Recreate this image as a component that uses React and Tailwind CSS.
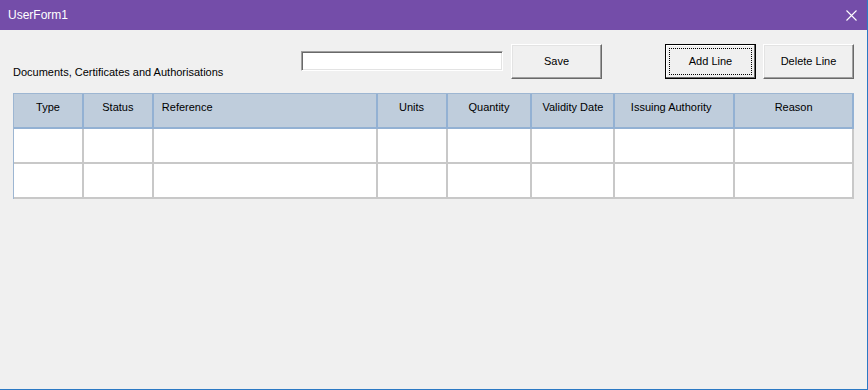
import React from "react";

const cols = [
  { name: "Type", w: "w-[70px]", align: "justify-center" },
  { name: "Status", w: "w-[70px]", align: "justify-center" },
  { name: "Reference", w: "w-[224px]", align: "justify-start pl-[8px]" },
  { name: "Units", w: "w-[70px]", align: "justify-center" },
  { name: "Quantity", w: "w-[85px]", align: "justify-center" },
  { name: "Validity Date", w: "w-[83px]", align: "justify-center" },
  { name: "Issuing Authority", w: "w-[120px]", align: "justify-center pr-[6px]" },
  { name: "Reason", w: "w-[119px]", align: "justify-center" },
];

function RaisedButton({ children, focused }) {
  if (focused) {
    return (
      <button className="relative w-[91px] h-[35px] border border-black bg-[#f0f0f0] shadow-[inset_-1px_-1px_0_#696969,inset_1px_1px_0_#ffffff] text-[11px] text-black flex items-center justify-center">
        <span className="absolute inset-[3px] border border-dotted border-black" />
        {children}
      </button>
    );
  }
  return (
    <button className="w-[91px] h-[35px] border border-t-white border-l-white border-r-[#696969] border-b-[#696969] bg-[#f0f0f0] shadow-[inset_-1px_-1px_0_#a0a0a0,inset_1px_1px_0_#e3e3e3] text-[11px] text-black flex items-center justify-center">
      {children}
    </button>
  );
}

export default function App() {
  return (
    <div
      className="w-[868px] h-[390px] bg-[#f0f0f0] border-r border-b border-[#2b79c4] flex flex-col overflow-hidden"
      style={{ fontFamily: '"Liberation Sans", Arial, sans-serif' }}
    >
      {/* title bar */}
      <div className="h-[30px] bg-[#744da9] flex items-center justify-between pl-[8px] pr-[10px] shrink-0">
        <span className="text-white text-[12px]">UserForm1</span>
        <svg width="11" height="11" viewBox="0 0 11 11" className="mr-[0px]">
          <path d="M0.5 0.5 L10.5 10.5 M10.5 0.5 L0.5 10.5" stroke="#ffffff" strokeWidth="1.1" />
        </svg>
      </div>

      <div className="pl-[13px] pt-[14px]">
        {/* top controls */}
        <div className="flex items-start">
          <div className="w-[288px] mt-[22px] text-[11px] leading-[13px] text-black whitespace-nowrap">
            Documents, Certificates and Authorisations
          </div>
          <div className="mt-[7px] w-[202px] h-[20px] bg-white border border-t-[#a0a0a0] border-l-[#a0a0a0] border-r-white border-b-white shadow-[inset_1px_1px_0_#696969,inset_-1px_-1px_0_#e3e3e3]" />
          <div className="ml-[8px]">
            <RaisedButton>Save</RaisedButton>
          </div>
          <div className="ml-[63px]">
            <RaisedButton focused>Add Line</RaisedButton>
          </div>
          <div className="ml-[7px]">
            <RaisedButton>Delete Line</RaisedButton>
          </div>
        </div>

        {/* grid */}
        <div className="mt-[14px] w-[841px] border-l border-t border-[#9db6d2]">
          <div className="flex h-[35px] bg-[#bfcddc]">
            {cols.map((c) => (
              <div
                key={c.name}
                className={`${c.w} flex items-start pt-[7px] text-[11px] leading-[13px] text-black border-r-2 border-b-2 border-[#93b1d3] ${c.align}`}
              >
                {c.name}
              </div>
            ))}
          </div>
          {[0, 1].map((r) => (
            <div key={r} className="flex h-[35px] bg-white">
              {cols.map((c) => (
                <div
                  key={c.name}
                  className={`${c.w} border-r-2 border-b-2 border-[#c8c8c8]`}
                />
              ))}
            </div>
          ))}
        </div>
      </div>
    </div>
  );
}
